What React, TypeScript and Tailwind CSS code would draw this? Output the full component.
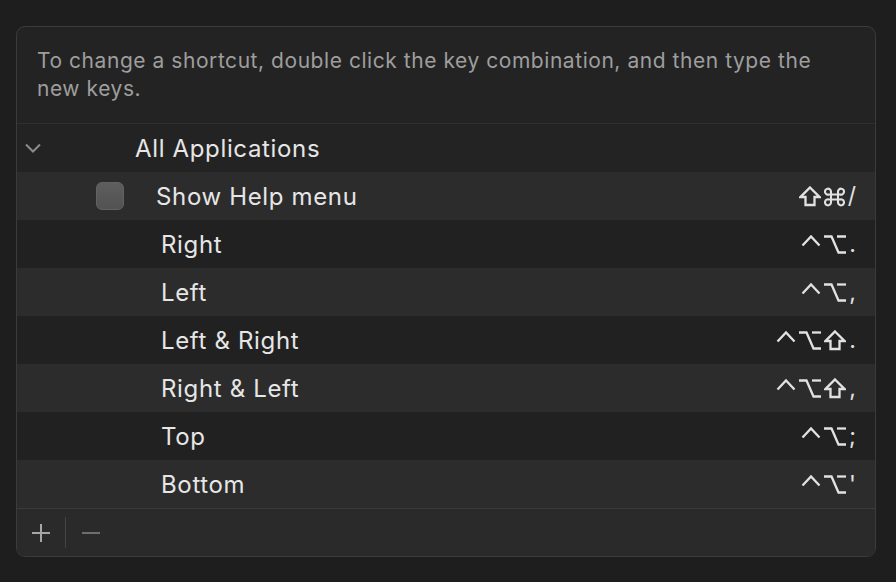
const rows = [
  { label: 'Right', keys: ['ctrl', 'opt', '.'] },
  { label: 'Left', keys: ['ctrl', 'opt', ','] },
  { label: 'Left & Right', keys: ['ctrl', 'opt', 'shift', '.'] },
  { label: 'Right & Left', keys: ['ctrl', 'opt', 'shift', ','] },
  { label: 'Top', keys: ['ctrl', 'opt', ';'] },
  { label: 'Bottom', keys: ['ctrl', 'opt', "'"] },
];

function KeySymbol({ k }: { k: string }) {
  const common = {
    fill: 'none',
    stroke: '#e2e2e2',
    strokeWidth: 2.3,
    strokeLinejoin: 'miter' as const,
  };
  if (k === 'ctrl')
    return (
      <svg width="20" height="24" viewBox="0 0 20 24">
        <polyline points="1.5,13.5 10,4.5 18.5,13.5" {...common} />
      </svg>
    );
  if (k === 'opt')
    return (
      <svg width="22" height="24" viewBox="0 0 22 24">
        <polyline points="0,4.5 7.5,4.5 14.5,20.5 22,20.5" {...common} />
        <line x1="13" y1="4.5" x2="22" y2="4.5" {...common} />
      </svg>
    );
  if (k === 'shift')
    return (
      <svg width="22" height="24" viewBox="0 0 22 24">
        <polygon points="11,3.5 20.5,13 15.5,13 15.5,21 6.5,21 6.5,13 1.5,13" {...common} />
      </svg>
    );
  if (k === 'cmd')
    return (
      <svg width="21" height="24" viewBox="0 0 21 24">
        <path
          d="M7 7.5v11M14 7.5v11M3.5 10.5h14M3.5 15.5h14M7 10.5H5a3 3 0 1 1 2-2.8M14 10.5h2a3 3 0 1 0-2-2.8M7 15.5H5a3 3 0 1 0 2 2.8M14 15.5h2a3 3 0 1 1-2 2.8"
          fill="none"
          stroke="#e2e2e2"
          strokeWidth={2.1}
        />
      </svg>
    );
  return <span className="text-[23px] leading-[24px]">{k}</span>;
}

function Keys({ keys }: { keys: string[] }) {
  return (
    <div className="flex items-center gap-[3px] pr-[19px] text-[#e2e2e2]">
      {keys.map((k, i) => (
        <KeySymbol key={i} k={k} />
      ))}
    </div>
  );
}

export default function App() {
  return (
    <div
      className="w-[896px] h-[582px] bg-[#1e1e1e] pt-[26px] px-[16px] overflow-hidden"
      style={{ fontFamily: 'Inter, "Noto Sans", sans-serif' }}
    >
      <div className="w-[860px] h-[531px] rounded-[9px] border border-[#3b3b3b] bg-[#232323] overflow-hidden flex flex-col">
        {/* Hint */}
        <div className="h-[97px] border-b border-[#2f2f2f] pl-[20px] pr-[45px] pt-[20px]">
          <p className="text-[21px] leading-[28px] text-[#9e9e9e] tracking-[0.55px]">
            To change a shortcut, double click the key combination, and then type the new keys.
          </p>
        </div>

        {/* Group row */}
        <div className="h-[48px] flex items-center text-[#e6e6e6]">
          <div className="w-[118px] pl-[8px] flex items-center">
            <svg width="16" height="10" viewBox="0 0 16 10">
              <polyline points="1,1.5 8,8.5 15,1.5" fill="none" stroke="#8c8c8c" strokeWidth={2} />
            </svg>
          </div>
          <span className="pt-[2px] text-[24px] tracking-[0.65px]">All Applications</span>
        </div>

        {/* Show Help menu */}
        <div className="h-[48px] flex items-center bg-[#2c2c2c] text-[#e6e6e6]">
          <div className="ml-[79px] w-[28px] h-[28px] rounded-[6px] bg-gradient-to-b from-[#5e5e5e] to-[#525252] border border-[#626262]" />
          <span className="ml-[32px] pt-[2px] text-[24px] tracking-[0.65px] flex-1">Show Help menu</span>
          <Keys keys={['shift', 'cmd', '/']} />
        </div>

        {rows.map((r, i) => (
          <div
            key={r.label}
            className={`h-[48px] flex items-center text-[#e6e6e6] ${i % 2 === 0 ? 'bg-[#212121]' : 'bg-[#2c2c2c]'}`}
          >
            <span className="pl-[144px] pt-[2px] text-[24px] tracking-[0.65px] flex-1">{r.label}</span>
            <Keys keys={r.keys} />
          </div>
        ))}

        {/* Footer */}
        <div className="flex-1 border-t border-[#3a3a3a] bg-[#2a2a2a] flex items-center">
          <div className="w-[48px] flex justify-center">
            <svg width="18" height="18" viewBox="0 0 18 18">
              <path d="M9 0v18M0 9h18" stroke="#a6a6a6" strokeWidth={2} />
            </svg>
          </div>
          <div className="w-px h-[31px] bg-[#444444]" />
          <div className="w-[50px] flex justify-center">
            <svg width="18" height="18" viewBox="0 0 18 18">
              <path d="M0 9h18" stroke="#6e6e6e" strokeWidth={2} />
            </svg>
          </div>
        </div>
      </div>
    </div>
  );
}
